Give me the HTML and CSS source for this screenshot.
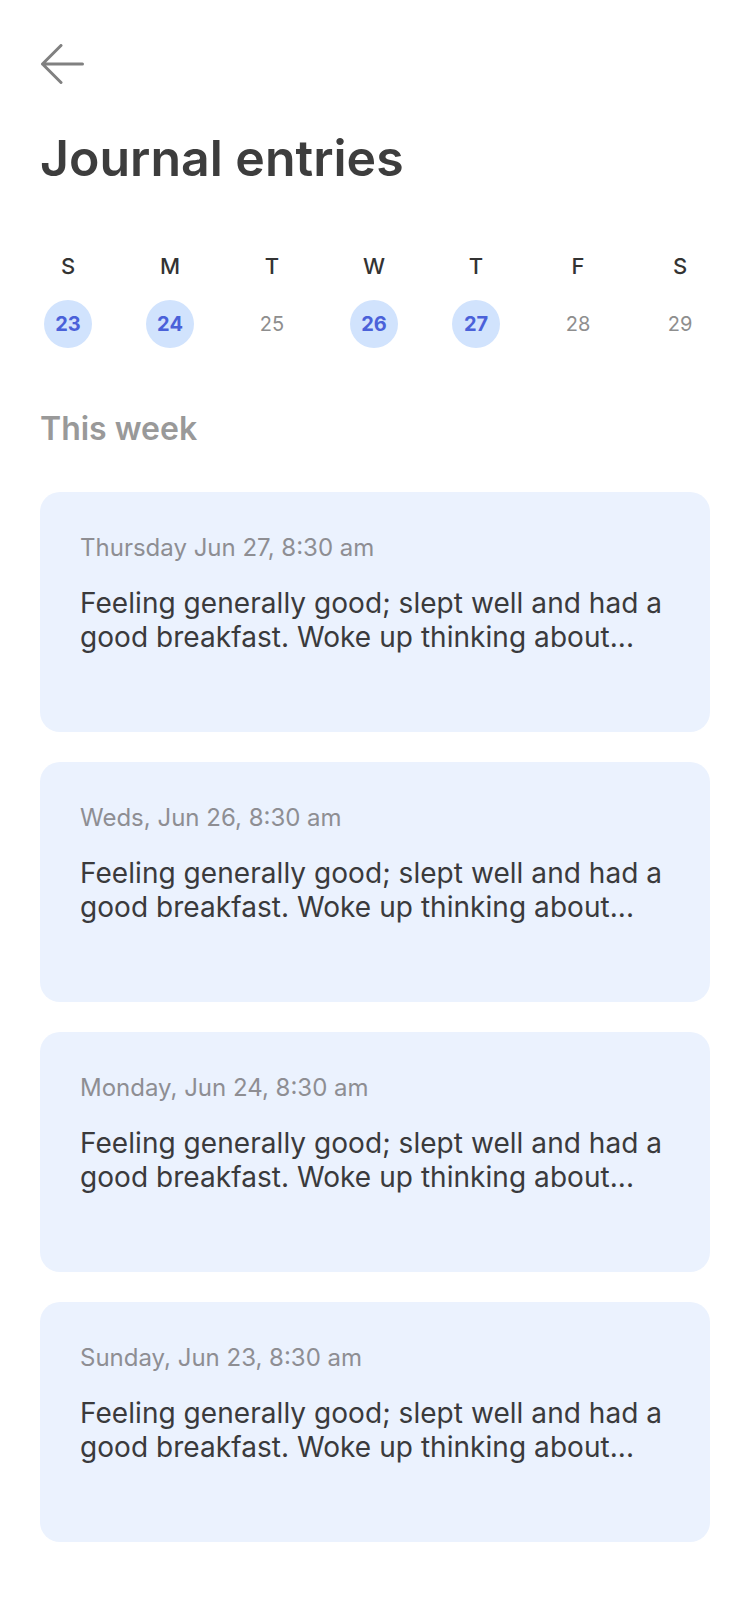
FILE: index.html
```html
<!DOCTYPE html>
<html lang="en">
<head>
<meta charset="utf-8">
<title>Journal entries</title>
<link rel="stylesheet" href="styles.css">
</head>
<body>
<main class="page">
  <header class="header">
    <button class="back" aria-label="Back">
      <svg width="44" height="40" viewBox="0 0 44 40" fill="none" stroke="#808080" stroke-width="3" stroke-linecap="round" stroke-linejoin="round">
        <path d="M2.5 20 H42.5 M21 1.5 L2.5 20 L21 38.5"/>
      </svg>
    </button>
    <h1 class="title">Journal entries</h1>
  </header>

  <section class="week">
    <div class="week-days">
      <span class="day-letter">S</span>
      <span class="day-letter">M</span>
      <span class="day-letter">T</span>
      <span class="day-letter">W</span>
      <span class="day-letter">T</span>
      <span class="day-letter">F</span>
      <span class="day-letter">S</span>
    </div>
    <div class="week-dates">
      <span class="date date-active">23</span>
      <span class="date date-active">24</span>
      <span class="date">25</span>
      <span class="date date-active">26</span>
      <span class="date date-active">27</span>
      <span class="date">28</span>
      <span class="date">29</span>
    </div>
  </section>

  <h2 class="section-title">This week</h2>

  <section class="entries">
    <article class="entry">
      <p class="entry-date">Thursday Jun 27, 8:30 am</p>
      <p class="entry-text">Feeling generally good; slept well and had a good breakfast. Woke up thinking about...</p>
    </article>
    <article class="entry">
      <p class="entry-date">Weds, Jun 26, 8:30 am</p>
      <p class="entry-text">Feeling generally good; slept well and had a good breakfast. Woke up thinking about...</p>
    </article>
    <article class="entry">
      <p class="entry-date">Monday, Jun 24, 8:30 am</p>
      <p class="entry-text">Feeling generally good; slept well and had a good breakfast. Woke up thinking about...</p>
    </article>
    <article class="entry">
      <p class="entry-date">Sunday, Jun 23, 8:30 am</p>
      <p class="entry-text">Feeling generally good; slept well and had a good breakfast. Woke up thinking about...</p>
    </article>
  </section>
</main>
</body>
</html>
```

FILE: styles.css
```css
* {
  box-sizing: border-box;
}

html, body {
  margin: 0;
  padding: 0;
  background: #ffffff;
}

body {
  font-family: Inter, "Noto Sans", "Liberation Sans", sans-serif;
  color: #3d3d3d;
}

.page {
  width: 750px;
  min-height: 1624px;
  padding: 44px 40px 40px;
}

.header {
  display: flex;
  flex-direction: column;
  align-items: flex-start;
}

.back {
  display: block;
  width: 44px;
  height: 40px;
  padding: 0;
  margin: 0;
  border: 0;
  background: none;
  cursor: pointer;
}

.back svg {
  display: block;
}

.title {
  margin: 44px 0 0;
  font-size: 50px;
  line-height: 60px;
  font-weight: 600;
  color: #3d3d3d;
}

.week {
  margin-top: 65px;
  display: flex;
  flex-direction: column;
  gap: 21px;
}

.week-days,
.week-dates {
  display: grid;
  grid-template-columns: repeat(7, 56px);
  column-gap: 46px;
}

.day-letter {
  text-align: center;
  font-size: 22px;
  line-height: 26px;
  font-weight: 500;
  color: #333333;
}

.date {
  justify-self: center;
  width: 48px;
  height: 48px;
  border-radius: 50%;
  display: flex;
  align-items: center;
  justify-content: center;
  font-size: 20px;
  font-weight: 400;
  color: #8e8e8e;
}

.date-active {
  background: #d1e3fd;
  color: #4a61d9;
  font-weight: 700;
}

.section-title {
  margin: 62px 0 0;
  font-size: 32px;
  line-height: 38px;
  font-weight: 600;
  color: #999999;
}

.entries {
  margin-top: 44px;
  display: flex;
  flex-direction: column;
  gap: 30px;
}

.entry {
  height: 240px;
  border-radius: 20px;
  background: #ebf2fe;
  padding: 42px 40px 0;
}

.entry-date {
  margin: 0;
  font-size: 24px;
  line-height: 28px;
  font-weight: 400;
  color: #8e8e93;
}

.entry-text {
  margin: 24px 0 0;
  font-size: 28px;
  line-height: 34px;
  font-weight: 400;
  letter-spacing: 0.05px;
  color: #3a3a3c;
}
```
